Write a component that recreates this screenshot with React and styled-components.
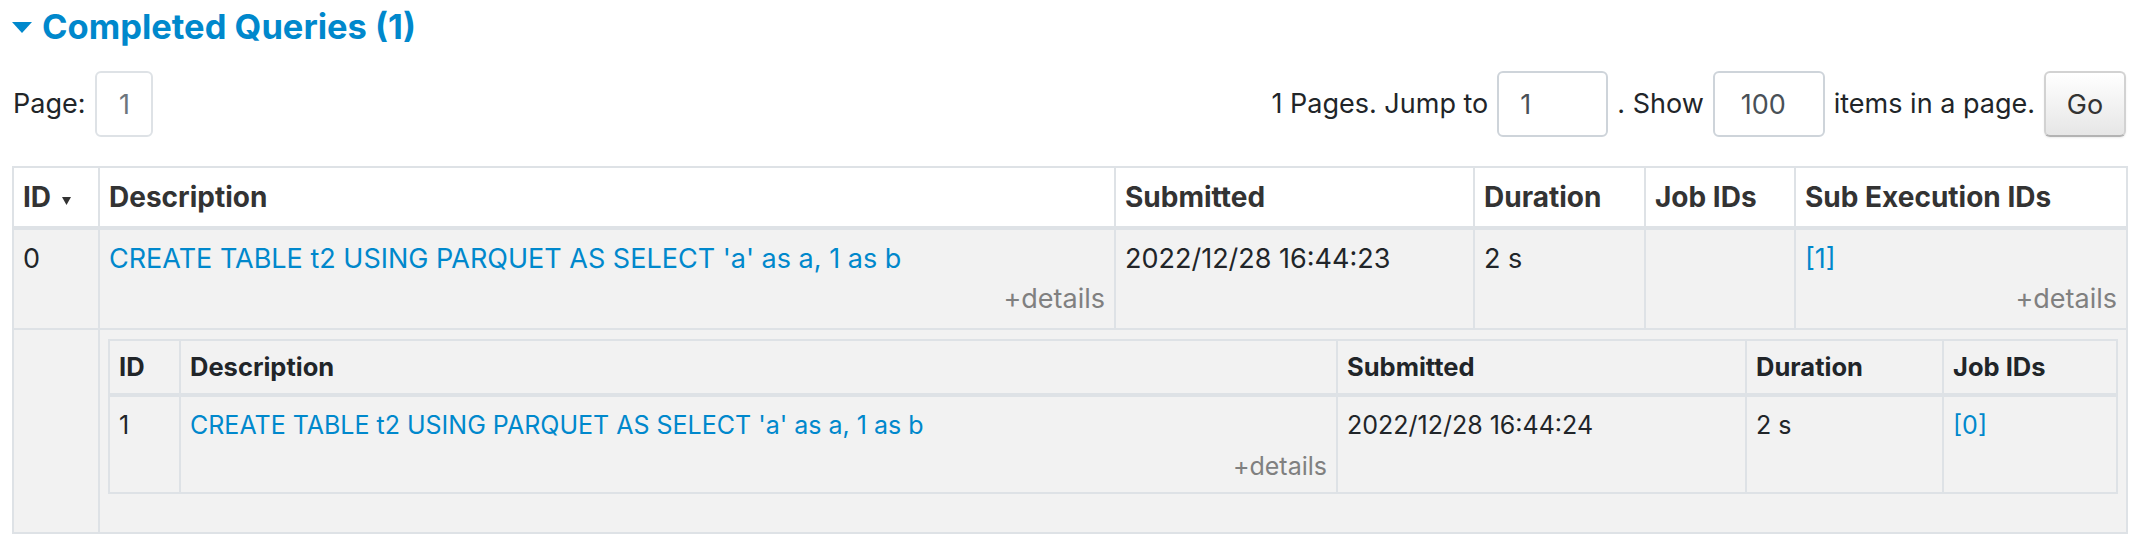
import React from 'react';
import styled, { createGlobalStyle } from 'styled-components';

const GlobalStyle = createGlobalStyle`
  html, body {
    margin: 0;
    padding: 0;
    background: #fff;
  }
  body {
    font-family: Inter, "Noto Sans", "Liberation Sans", sans-serif;
    font-size: 27px;
    color: #212529;
  }
  * {
    box-sizing: border-box;
  }
`;

const Page = styled.div`
  padding: 6px 12px 0 12px;
`;

const SectionTitle = styled.h4`
  display: flex;
  align-items: center;
  gap: 10px;
  margin: 0;
  height: 42px;
  font-size: 34.5px;
  font-weight: 700;
  line-height: 42px;
  color: #0088cc;
  cursor: pointer;
`;

const Controls = styled.div`
  display: flex;
  align-items: center;
  justify-content: space-between;
  height: 66px;
  margin-top: 23px;
`;

const ControlGroup = styled.div`
  display: flex;
  align-items: center;
  gap: 9px;
  white-space: nowrap;
`;

const Label = styled.span`
  line-height: 32px;
  padding-left: ${(p) => (p.$first ? '1px' : '0')};
`;

const PageLink = styled.span`
  display: flex;
  align-items: center;
  justify-content: center;
  width: 58px;
  height: 66px;
  margin-left: 1px;
  border: 2px solid #dee2e6;
  border-radius: 6px;
  color: #6c757d;
`;

const NumberInput = styled.input`
  width: ${(p) => p.$width}px;
  height: 66px;
  padding: 0 0 0 ${(p) => p.$pad}px;
  border: 2px solid #ced4da;
  border-radius: 6px;
  font: inherit;
  color: #495057;
  background: #fff;
  outline: none;
`;

const GoButton = styled.button`
  width: 82px;
  height: 66px;
  padding: 0;
  border: 2px solid #d2d2d2;
  border-bottom-color: #b3b3b3;
  border-radius: 6px;
  background: linear-gradient(#ffffff, #e6e6e6);
  box-shadow: 0 1px 2px rgba(0, 0, 0, 0.08);
  font: inherit;
  color: #333;
  cursor: pointer;
`;

const Table = styled.table`
  width: 100%;
  table-layout: fixed;
  border-collapse: collapse;
  margin-top: ${(p) => (p.$nested ? '0' : '29px')};
  margin-bottom: ${(p) => (p.$nested ? '38px' : '0')};
  font-size: ${(p) => (p.$nested ? '25px' : '27px')};
  background: ${(p) => (p.$nested ? '#f2f2f2' : '#fff')};
`;

const Th = styled.th`
  text-align: left;
  vertical-align: top;
  font-weight: 700;
  font-size: ${(p) => (p.$nested ? '25.5px' : '28px')};
  color: ${(p) => (p.$nested ? '#212529' : '#333')};
  line-height: ${(p) => (p.$nested ? '38px' : '40px')};
  padding: ${(p) => (p.$nested ? '7px 9px' : '9px 9px')};
  border: 2px solid #dee2e6;
  border-bottom-width: 4px;
  white-space: nowrap;
  overflow: hidden;
`;

const Td = styled.td`
  vertical-align: top;
  line-height: ${(p) => (p.$nested ? '37.5px' : '40px')};
  padding: ${(p) => (p.$nested ? '10px 9px 7px' : '9px 9px')};
  border: 2px solid #dee2e6;
  background: #f2f2f2;
  color: #212529;
`;

const HolderTd = styled(Td)`
  padding: 9px 9px 0 8px;
`;

const Link = styled.a`
  color: #0088cc;
  text-decoration: none;
  cursor: pointer;
`;

const Details = styled.div`
  margin-top: ${(p) => (p.$nested ? '3px' : '0')};
  text-align: right;
  color: #808080;
  cursor: pointer;
`;

const SortArrow = styled.svg`
  margin-left: 11px;
  vertical-align: 2px;
`;

const Caret = () => (
  <svg width="20" height="11" viewBox="0 0 20 11">
    <path d="M0 0 L20 0 L10 11 Z" fill="#0088cc" />
  </svg>
);

const mainCols = [86, 1016, 359, 171, 150, 332];
const nestedCols = [71, 1157, 409, 197, 174];

const Cols = ({ widths }) => (
  <colgroup>
    {widths.map((w, i) => (
      <col key={i} style={{ width: w }} />
    ))}
  </colgroup>
);

const query = "CREATE TABLE t2 USING PARQUET AS SELECT 'a' as a, 1 as b";

const SubExecutions = () => (
  <Table $nested>
    <Cols widths={nestedCols} />
    <thead>
      <tr>
        <Th $nested>ID</Th>
        <Th $nested>Description</Th>
        <Th $nested>Submitted</Th>
        <Th $nested>Duration</Th>
        <Th $nested>Job IDs</Th>
      </tr>
    </thead>
    <tbody>
      <tr>
        <Td $nested>1</Td>
        <Td $nested>
          <Link>{query}</Link>
          <Details $nested>+details</Details>
        </Td>
        <Td $nested>2022/12/28 16:44:24</Td>
        <Td $nested>2 s</Td>
        <Td $nested>
          <Link>[0]</Link>
        </Td>
      </tr>
    </tbody>
  </Table>
);

export default function App() {
  return (
    <>
      <GlobalStyle />
      <Page>
        <SectionTitle>
          <Caret />
          <span>Completed Queries (1)</span>
        </SectionTitle>

        <Controls>
          <ControlGroup>
            <Label $first>Page:</Label>
            <PageLink>1</PageLink>
          </ControlGroup>
          <ControlGroup>
            <Label>1 Pages. Jump to</Label>
            <NumberInput $width={111} $pad={21} defaultValue="1" readOnly />
            <Label>. Show</Label>
            <NumberInput $width={112} $pad={26} defaultValue="100" readOnly />
            <Label>items in a page.</Label>
            <GoButton>Go</GoButton>
          </ControlGroup>
        </Controls>

        <Table>
          <Cols widths={mainCols} />
          <thead>
            <tr>
              <Th>
                ID
                <SortArrow width="9" height="8" viewBox="0 0 9 8">
                  <path d="M0 0 L9 0 L4.5 8 Z" fill="#333" />
                </SortArrow>
              </Th>
              <Th>Description</Th>
              <Th>Submitted</Th>
              <Th>Duration</Th>
              <Th>Job IDs</Th>
              <Th>Sub Execution IDs</Th>
            </tr>
          </thead>
          <tbody>
            <tr>
              <Td>0</Td>
              <Td>
                <Link>{query}</Link>
                <Details>+details</Details>
              </Td>
              <Td>2022/12/28 16:44:23</Td>
              <Td>2 s</Td>
              <Td />
              <Td>
                <Link>[1]</Link>
                <Details>+details</Details>
              </Td>
            </tr>
            <tr>
              <Td />
              <HolderTd colSpan={5}>
                <SubExecutions />
              </HolderTd>
            </tr>
          </tbody>
        </Table>
      </Page>
    </>
  );
}
